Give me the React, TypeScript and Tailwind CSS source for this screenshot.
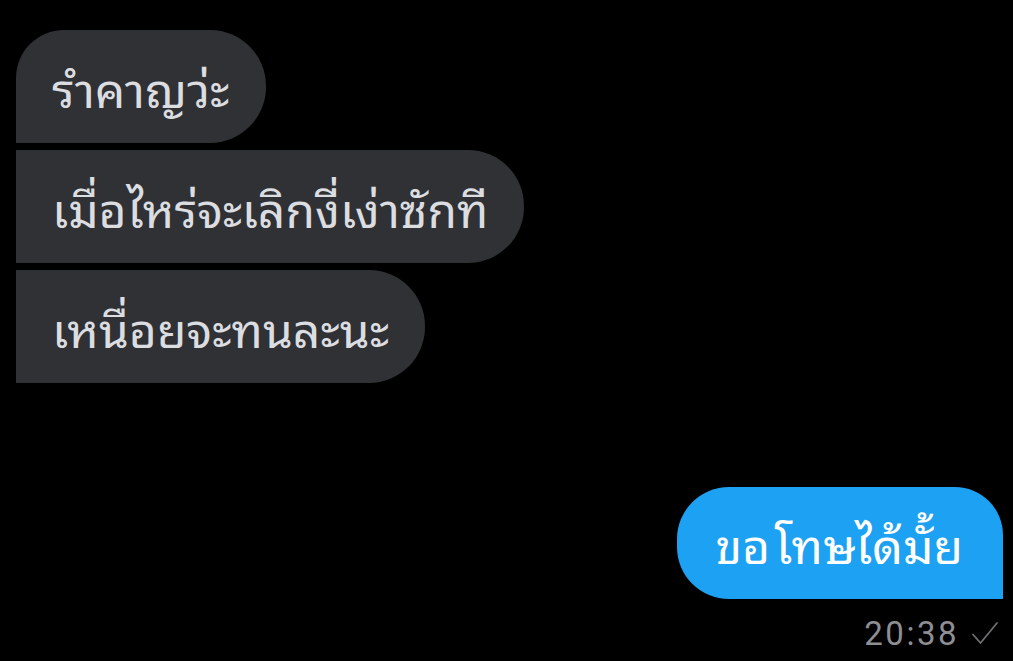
const thai = "font-['Noto_Sans_Thai_Looped','Loma',sans-serif]";

function Incoming({ text, first }: { text: string; first?: boolean }) {
  return (
    <div
      className={`flex h-[113px] w-fit items-center rounded-r-[56px] bg-[#2f3134] pl-9 pr-9 ${first ? "rounded-tl-[48px]" : ""}`}
    >
      <span className={`${thai} text-[48px] leading-none text-[#dcdde0]`}>
        {text}
      </span>
    </div>
  );
}

function Tick() {
  return (
    <svg width="28" height="26" viewBox="0 0 28 26" fill="none" className="text-[#6e6e73]">
      <path d="M2 13.5 9.5 22 26 2" stroke="currentColor" strokeWidth="1.8" strokeLinecap="round" strokeLinejoin="round" />
    </svg>
  );
}

export default function App() {
  return (
    <div className="flex h-[661px] w-[1013px] flex-col overflow-hidden bg-black">
      <div className="flex flex-col gap-[7px] pl-4 pt-[30px]">
        <Incoming text="รำคาญว่ะ" first />
        <Incoming text="เมื่อไหร่จะเลิกงี่เง่าซักที" />
        <Incoming text="เหนื่อยจะทนละนะ" />
      </div>

      <div className="mt-[104px] flex justify-end pr-[10px]">
        <div className="flex h-[112px] items-center rounded-l-[52px] rounded-tr-[48px] bg-[#1da1f2] pl-[38px] pr-[40px]">
          <span className={`${thai} text-[48px] leading-none text-white [word-spacing:-8px]`}>
            ขอ โทษได้มั้ย
          </span>
        </div>
      </div>

      <div className="mt-[18px] flex items-center justify-end gap-[12px] pr-[14px]">
        <span className="font-['Roboto',sans-serif] text-[33px] leading-none tracking-[2.5px] text-[#8e8e93]">
          20:38
        </span>
        <Tick />
      </div>
    </div>
  );
}
